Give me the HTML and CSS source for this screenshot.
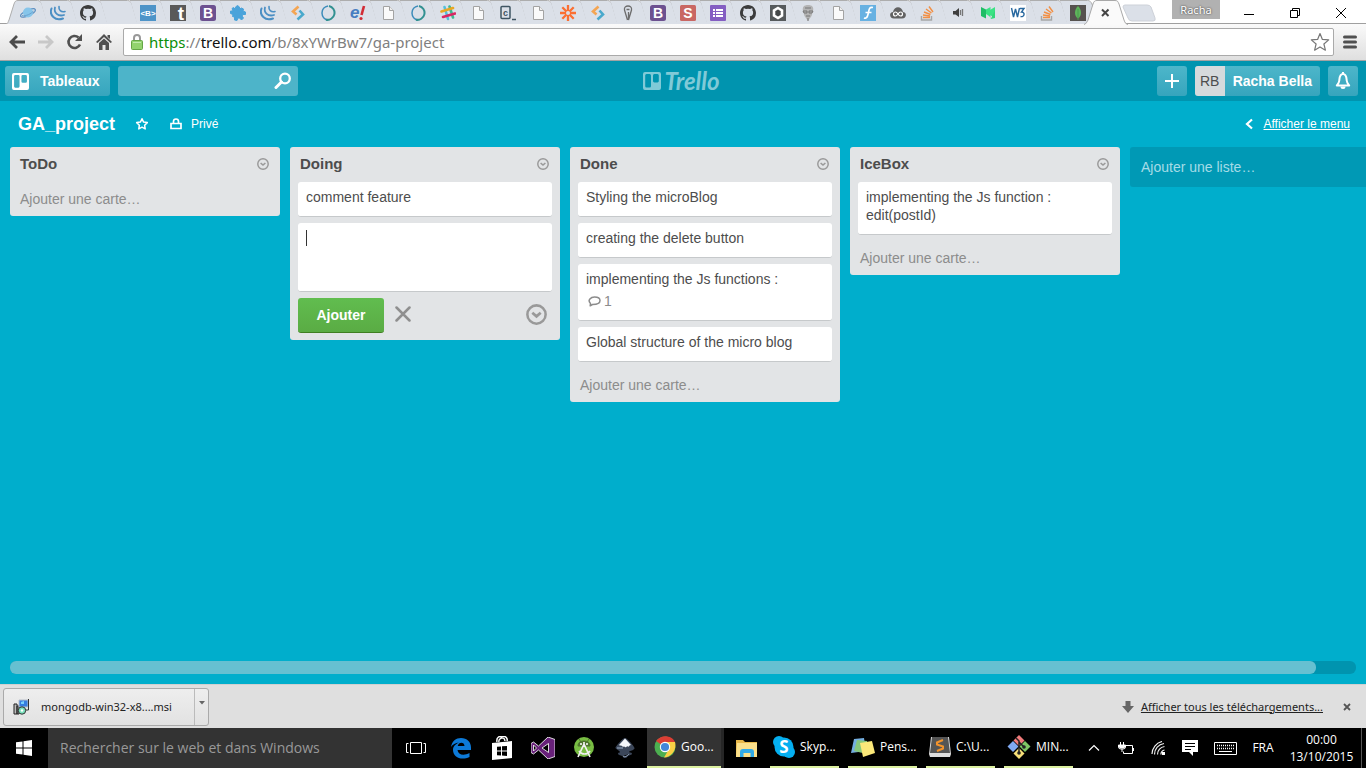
FILE: index.html
```html
<!DOCTYPE html>
<html lang="fr">
<head>
<meta charset="utf-8">
<title>GA_project | Trello</title>
<link rel="stylesheet" href="styles.css">
</head>
<body>
<svg class="symbols" aria-hidden="true">
  <symbol id="tab" viewBox="0 0 44 24">
    <path d="M4 1H31.500C34 1 35 2 36 4L42 24H11L5.500 4C5 2 4.500 1 4 1Z" fill="#dbe0e8"/>
    <path d="M4 .5H31.500C34 .5 35 2 36 4L41 21C41.500 23 42 23.500 43 24" fill="none" stroke="#adadad"/>
  </symbol>
  <symbol id="tab-first" viewBox="0 0 44 24">
    <path d="M0 24C2 23.500 2 22 3 20L8 4C9 1 10 .5 12 .5H31.500C34 .5 35 2 36 4L41 21C41.500 23 42 23.500 43 24" fill="#dbe0e8" stroke="#adadad"/>
  </symbol>
  <symbol id="planet" viewBox="0 0 16 16"><ellipse cx="8" cy="8" rx="8" ry="2.600" fill="none" stroke="#5b8ec0" stroke-width="1.200" transform="rotate(-25 8 8)"/><circle cx="8" cy="7.500" r="5" fill="#86c5ea"/><path d="M2 10.500C6 11.500 11 9 14 5.500" fill="none" stroke="#6aa2cf"/></symbol>
  <symbol id="jq" viewBox="0 0 16 16"><g fill="none" stroke="#4b8fc4" stroke-linecap="round"><path d="M1.500 3.500C-1 10 5 16.500 13 13.500" stroke-width="2"/><path d="M5 2.500C3.500 7.500 8 12 14 10" stroke-width="1.800"/><path d="M9 1.500C8.500 5 11 7.500 15 6.500" stroke-width="1.600"/></g></symbol>
  <symbol id="github" viewBox="0 0 16 16"><path fill="#3c3c3c" d="M8 0C3.580 0 0 3.580 0 8c0 3.540 2.290 6.530 5.470 7.590.4.070.55-.17.55-.38v-1.490c-2.230.48-2.700-1.070-2.700-1.070-.36-.92-.89-1.170-.89-1.170-.73-.5.05-.49.050-.49.810.060 1.230.83 1.230.83.72 1.230 1.880.87 2.340.67.070-.52.28-.87.51-1.070-1.780-.2-3.640-.89-3.640-3.950 0-.87.31-1.590.82-2.150-.08-.2-.36-1.020.08-2.120 0 0 .67-.21 2.200.82a7.600 7.600 0 0 1 4 0c1.530-1.040 2.200-.82 2.200-.82.44 1.100.16 1.920.08 2.120.51.56.82 1.270.82 2.150 0 3.070-1.870 3.750-3.650 3.950.29.25.54.73.54 1.480v2.200c0 .21.15.46.55.38A8 8 0 0 0 16 8c0-4.420-3.580-8-8-8z"/></symbol>
  <symbol id="doc" viewBox="0 0 16 16"><path d="M3.500 1.500H9.500L13.500 5.500V14.500H3.500Z" fill="#fafafa" stroke="#a3a3a3"/><path d="M9.500 1.500V5.500H13.500" fill="#eee" stroke="#a3a3a3"/></symbol>
  <symbol id="btag" viewBox="0 0 16 16"><path fill="#4e94c8" d="M0 0h16v16H0z"/><text x="8" y="11" font-size="8" font-weight="700" fill="#fff" text-anchor="middle">&lt;B&gt;</text></symbol>
  <symbol id="tumblr" viewBox="0 0 16 16"><path fill="#595959" d="M0 0h16v16H0z"/><text x="11" y="15" font-size="19" font-weight="700" fill="#fff" text-anchor="middle">t</text></symbol>
  <symbol id="boot" viewBox="0 0 16 16"><rect width="16" height="16" rx="2.500" fill="#6c5190"/><text x="8" y="13" font-size="14" font-weight="700" fill="#fff" text-anchor="middle">B</text></symbol>
  <symbol id="puzzle" viewBox="0 0 16 16"><path fill="#4aa3da" d="M5 4L5.500 2 7.500 .5 9.500 2 9.500 4 11.500 3 13.500 4 13 6 15.500 7 15.500 9.500 13 9.500 12 11 13.500 13 11.500 15 9.500 13 8 13 7 15.500 4.500 15 4.500 12 2.500 11.500 3 9.500 .5 8.500 .5 6 3 6 2 3.500 3.500 2.500Z" stroke="#4aa3da" stroke-linejoin="round"/></symbol>
  <symbol id="seven" viewBox="0 0 16 16"><path d="M8.500 1.500L3 6.500 6.500 9.500" fill="none" stroke="#f4a552" stroke-width="2.600"/><path d="M9.500 5.500L13 9.500 7.500 14.500" fill="none" stroke="#49a9cc" stroke-width="2.600"/></symbol>
  <symbol id="ring" viewBox="0 0 16 16"><path d="M8 .9A7.200 7.200 0 0 0 8 15.100" fill="none" stroke="#3c8cba" stroke-width="1.500"/><path d="M6 14.700A7 7 0 0 0 9 1" fill="none" stroke="#329191" stroke-width="2"/></symbol>
  <symbol id="eb" viewBox="0 0 16 16"><text x="0" y="13" font-size="17" font-style="italic" font-weight="700" fill="#477dc1">e</text><path d="M14 1L11.500 10" stroke="#d22c35" stroke-width="2.600"/><circle cx="11" cy="13.500" r="1.600" fill="#d22c35"/></symbol>
  <symbol id="slack" viewBox="0 0 16 16"><g stroke-width="2.600" stroke-linecap="round"><path d="M4.500 2L8 14" stroke="#53bfdb"/><path d="M9.500 1.500L13 12.500" stroke="#3eb991"/><path d="M1.500 6.500L13 3" stroke="#e8a723"/><path d="M3 12L15 8.500" stroke="#d92764"/></g></symbol>
  <symbol id="codec" viewBox="0 0 16 16"><rect x="1" y="1.500" width="9" height="12" rx="1" fill="none" stroke="#3f5563" stroke-width="1.500"/><text x="5.500" y="11" font-size="9" font-weight="700" fill="#3f5563" text-anchor="middle">c</text><path d="M12 14.500h4" stroke="#3f5563" stroke-width="1.500"/></symbol>
  <symbol id="zap" viewBox="0 0 16 16"><path d="M8 0V16M0 8H16M2.300 2.300L13.700 13.700M13.700 2.300L2.300 13.700" stroke="#fb6f32" stroke-width="2.300"/><circle cx="8" cy="8" r="2" fill="#dbe0e8"/></symbol>
  <symbol id="pin" viewBox="0 0 16 16"><path d="M7.500 15L4.500 5C4 2 6 1 8 1S12 2 11.500 5L8.500 15V7M6.500 4.500h3" fill="none" stroke="#6d6d6d" stroke-width="1.300"/></symbol>
  <symbol id="sred" viewBox="0 0 16 16"><rect width="16" height="16" rx="1.500" fill="#c96763"/><text x="8" y="13" font-size="14" font-weight="700" fill="#fff" text-anchor="middle">S</text></symbol>
  <symbol id="forms" viewBox="0 0 16 16"><rect width="16" height="16" rx="1" fill="#845ec2"/><path d="M3 5h2M3 8h2M3 11h2M6 5h7M6 8h7M6 11h7" stroke="#fff" stroke-width="1.800"/></symbol>
  <symbol id="hex" viewBox="0 0 16 16"><path fill="#565a5c" d="M0 0h16v16H0z"/><path d="M8 3L12 5.500V10.500L8 13 4 10.500V5.500Z" fill="#454849" stroke="#fff" stroke-width="2.600"/></symbol>
  <symbol id="face" viewBox="0 0 16 16"><path d="M3 6C2 2 4 0 8 0S14 2 13 6L11.500 11 8 16 4.500 11Z" fill="#b4b4b4"/><path d="M3 6h4v2H4ZM9 6h4l-1 2H9ZM6 11h4M8 13v3M5 3h6" fill="none" stroke="#777"/></symbol>
  <symbol id="fblue" viewBox="0 0 16 16"><path fill="#67b1e2" d="M0 0h16v16H0z"/><path d="M13 2.500C8 1.500 9.500 6 7.500 11 7 13 5 13.500 4 13M5.500 7.500h6" fill="none" stroke="#fff" stroke-width="1.700"/></symbol>
  <symbol id="cloud" viewBox="0 0 16 16"><path d="M4 13.500C-1 13.500-1 7 3 7 4 .5 12 .5 13 7 17 7 17 13.500 12 13.500Z" fill="#626262"/><path d="M8 9C7 7.500 6.500 7 5.500 7a2 2 0 0 0 0 4C7.500 11 8.500 7 10.500 7a2 2 0 0 1 0 4C9.500 11 9 10.500 8 9Z" fill="none" stroke="#fff" stroke-width="1.200"/></symbol>
  <symbol id="stack" viewBox="0 0 16 16"><path d="M1.500 11V15H11.500V11" fill="none" stroke="#a6a6a6" stroke-width="1.400"/><path d="M3 12.500h7M3 10l7 1M4 7l6.500 2.500M6 4l5.500 4M9 1.500L13 7" stroke="#f28f44" stroke-width="1.400"/></symbol>
  <symbol id="sound" viewBox="0 0 16 16"><path d="M3 6h2.500L9 3V12L5.500 9.500H3Z" fill="#3f3f3f"/><path d="M10.500 5v5M12.500 4v7" stroke="#777" stroke-width="1.300"/></symbol>
  <symbol id="medium" viewBox="0 0 16 16"><path d="M1 2L6 4.500V13.500L1 11Z" fill="#20bd66"/><path d="M6 4.500L10.500 2 10.500 12 6 9Z" fill="#3be384"/><path d="M10 5l5-3v11l-5-3Z" fill="#3be384"/><path d="M6 4.500L11 13.500 15 5V13L11 14Z" fill="#33d77a"/></symbol>
  <symbol id="w3" viewBox="0 0 16 16"><path fill="#fff" d="M0 0h16v16H0z"/><path d="M1.500 3l2 9 2-8 2 8 2-9M10 3.500h4L11.500 7c4 0 3 5.500-1 4.500" fill="none" stroke="#28689f" stroke-width="1.400"/></symbol>
  <symbol id="mongo" viewBox="0 0 16 16"><path fill="#56524f" d="M0 0h16v16H0z"/><path d="M8 1C12 5 12 11 8 13.500 4 11 4 5 8 1Z" fill="#5eb55b"/><path d="M8 4V15" stroke="#4a9a4f"/></symbol>
  <symbol id="board-mark" viewBox="0 0 18 18"><path fill="currentColor" fill-rule="evenodd" d="M2 0H16Q18 0 18 2V16Q18 18 16 18H2Q0 18 0 16V2Q0 0 2 0ZM3.500 2Q2.200 2 2.200 3.500V14Q2.200 15.500 3.500 15.500H6.700Q8 15.500 8 14V3.500Q8 2 6.700 2ZM11.300 2Q10 2 10 3.500V9Q10 10.400 11.300 10.400H14.500Q15.800 10.400 15.800 9V3.500Q15.800 2 14.500 2Z"/></symbol>
  <symbol id="circle-down" viewBox="0 0 20 20"><circle cx="10" cy="10" r="8.700" fill="none" stroke="currentColor" stroke-width="2.400"/><path d="M6 8.300L10 11.800 14 8.300" fill="none" stroke="currentColor" stroke-width="2.600"/></symbol>
</svg>

<header class="browser">
  <div class="tab-strip">
    <div class="tabs">
      <button class="tab" aria-label="Onglet 1"><svg class="shape"><use href="#tab-first"/></svg><svg class="fav"><use href="#planet"/></svg></button>
      <button class="tab" aria-label="Onglet 2"><svg class="shape"><use href="#tab"/></svg><svg class="fav"><use href="#jq"/></svg></button>
      <button class="tab" aria-label="Onglet 3"><svg class="shape"><use href="#tab"/></svg><svg class="fav"><use href="#github"/></svg></button>
      <button class="tab" aria-label="Onglet 4"><svg class="shape"><use href="#tab"/></svg></button>
      <button class="tab" aria-label="Onglet 5"><svg class="shape"><use href="#tab"/></svg><svg class="fav"><use href="#btag"/></svg></button>
      <button class="tab" aria-label="Onglet 6"><svg class="shape"><use href="#tab"/></svg><svg class="fav"><use href="#tumblr"/></svg></button>
      <button class="tab" aria-label="Onglet 7"><svg class="shape"><use href="#tab"/></svg><svg class="fav"><use href="#boot"/></svg></button>
      <button class="tab" aria-label="Onglet 8"><svg class="shape"><use href="#tab"/></svg><svg class="fav"><use href="#puzzle"/></svg></button>
      <button class="tab" aria-label="Onglet 9"><svg class="shape"><use href="#tab"/></svg><svg class="fav"><use href="#jq"/></svg></button>
      <button class="tab" aria-label="Onglet 10"><svg class="shape"><use href="#tab"/></svg><svg class="fav"><use href="#seven"/></svg></button>
      <button class="tab" aria-label="Onglet 11"><svg class="shape"><use href="#tab"/></svg><svg class="fav"><use href="#ring"/></svg></button>
      <button class="tab" aria-label="Onglet 12"><svg class="shape"><use href="#tab"/></svg><svg class="fav"><use href="#eb"/></svg></button>
      <button class="tab" aria-label="Onglet 13"><svg class="shape"><use href="#tab"/></svg><svg class="fav"><use href="#doc"/></svg></button>
      <button class="tab" aria-label="Onglet 14"><svg class="shape"><use href="#tab"/></svg><svg class="fav"><use href="#ring"/></svg></button>
      <button class="tab" aria-label="Onglet 15"><svg class="shape"><use href="#tab"/></svg><svg class="fav"><use href="#slack"/></svg></button>
      <button class="tab" aria-label="Onglet 16"><svg class="shape"><use href="#tab"/></svg><svg class="fav"><use href="#doc"/></svg></button>
      <button class="tab" aria-label="Onglet 17"><svg class="shape"><use href="#tab"/></svg><svg class="fav"><use href="#codec"/></svg></button>
      <button class="tab" aria-label="Onglet 18"><svg class="shape"><use href="#tab"/></svg><svg class="fav"><use href="#doc"/></svg></button>
      <button class="tab" aria-label="Onglet 19"><svg class="shape"><use href="#tab"/></svg><svg class="fav"><use href="#zap"/></svg></button>
      <button class="tab" aria-label="Onglet 20"><svg class="shape"><use href="#tab"/></svg><svg class="fav"><use href="#seven"/></svg></button>
      <button class="tab" aria-label="Onglet 21"><svg class="shape"><use href="#tab"/></svg><svg class="fav"><use href="#pin"/></svg></button>
      <button class="tab" aria-label="Onglet 22"><svg class="shape"><use href="#tab"/></svg><svg class="fav"><use href="#boot"/></svg></button>
      <button class="tab" aria-label="Onglet 23"><svg class="shape"><use href="#tab"/></svg><svg class="fav"><use href="#sred"/></svg></button>
      <button class="tab" aria-label="Onglet 24"><svg class="shape"><use href="#tab"/></svg><svg class="fav"><use href="#forms"/></svg></button>
      <button class="tab" aria-label="Onglet 25"><svg class="shape"><use href="#tab"/></svg><svg class="fav"><use href="#github"/></svg></button>
      <button class="tab" aria-label="Onglet 26"><svg class="shape"><use href="#tab"/></svg><svg class="fav"><use href="#hex"/></svg></button>
      <button class="tab" aria-label="Onglet 27"><svg class="shape"><use href="#tab"/></svg><svg class="fav"><use href="#face"/></svg></button>
      <button class="tab" aria-label="Onglet 28"><svg class="shape"><use href="#tab"/></svg><svg class="fav"><use href="#doc"/></svg></button>
      <button class="tab" aria-label="Onglet 29"><svg class="shape"><use href="#tab"/></svg><svg class="fav"><use href="#fblue"/></svg></button>
      <button class="tab" aria-label="Onglet 30"><svg class="shape"><use href="#tab"/></svg><svg class="fav"><use href="#cloud"/></svg></button>
      <button class="tab" aria-label="Onglet 31"><svg class="shape"><use href="#tab"/></svg><svg class="fav"><use href="#stack"/></svg></button>
      <button class="tab" aria-label="Onglet 32"><svg class="shape"><use href="#tab"/></svg><svg class="fav"><use href="#sound"/></svg></button>
      <button class="tab" aria-label="Onglet 33"><svg class="shape"><use href="#tab"/></svg><svg class="fav"><use href="#medium"/></svg></button>
      <button class="tab" aria-label="Onglet 34"><svg class="shape"><use href="#tab"/></svg><svg class="fav"><use href="#w3"/></svg></button>
      <button class="tab" aria-label="Onglet 35"><svg class="shape"><use href="#tab"/></svg><svg class="fav"><use href="#stack"/></svg></button>
      <button class="tab" aria-label="Onglet 36"><svg class="shape"><use href="#tab"/></svg><svg class="fav"><use href="#mongo"/></svg></button>
      <button class="tab tab-active" aria-label="Fermer l'onglet"><svg class="shape" viewBox="0 0 44 25"><path d="M0 25C2 24 3 22 4 20L9 4C10 1 11 .5 13 .5H31C34 .5 34 2 35 4L40 20C41 23 42 24 44 24.500V25Z" fill="#fafafa"/><path d="M0 24.500C2 24 3 22 4 20L9 4C10 1 11 .5 13 .5H31C34 .5 34 2 35 4L40 20C41 23 42 24 44 24.500" fill="none" stroke="#a8a8a8"/><path d="M18 9.500l6.500 6.500M24.500 9.500L18 16" stroke="#444" stroke-width="2"/></svg></button>
      <button class="new-tab" aria-label="Nouvel onglet"><svg width="34" height="18" viewBox="0 0 34 18"><path d="M3 1H25Q28 1 29 3L33 14Q34 17 31 17H10Q7 17 6 14L1 3Q1 1 3 1Z" fill="#dbe0e8" stroke="#cdd1d8"/></svg></button>
    </div>
    <div class="window-tools">
      <button class="profile">Racha</button>
      <button class="win" aria-label="Réduire"><svg width="12" height="12"><path d="M1 7.500h10" stroke="#000"/></svg></button>
      <button class="win" aria-label="Restaurer"><svg width="12" height="12"><path d="M1.500 3.500h7v7h-7ZM3.500 3.500v-2h7v7h-2" fill="none" stroke="#000"/></svg></button>
      <button class="win" aria-label="Fermer"><svg width="12" height="12"><path d="M1 1l10 10M11 1L1 11" stroke="#000"/></svg></button>
    </div>
  </div>
  <nav class="toolbar">
    <button class="tool" aria-label="Retour"><svg width="18" height="16"><path d="M9 2L3 8l6 6M3 8h14" fill="none" stroke="#4b4b4b" stroke-width="2.800"/></svg></button>
    <button class="tool" aria-label="Avancer"><svg width="18" height="16"><path d="M9 2l6 6-6 6M15 8H1" fill="none" stroke="#c8c8c8" stroke-width="2.800"/></svg></button>
    <button class="tool" aria-label="Actualiser"><svg width="18" height="16"><path d="M14 10.500A6 6 0 1 1 12.500 3.500" fill="none" stroke="#505050" stroke-width="2.600"/><path d="M16 0v7H9Z" fill="#505050"/></svg></button>
    <button class="tool" aria-label="Accueil"><svg width="18" height="16"><path d="M9 0l8 8-1.500 1L9 3 2.500 9 1 8ZM4 9l5-4.500L14 9v7h-3.500v-5h-3v5H4ZM12.500 1H15v4l-2.500-2Z" fill="#505050"/></svg></button>
    <div class="address">
      <svg width="12" height="16" viewBox="0 0 12 16"><path d="M3 7V4a3 3 0 0 1 6 0v3" fill="none" stroke="#999" stroke-width="2"/><rect x=".5" y="6.500" width="11" height="9" rx="1" fill="#92d36e" stroke="#64a546"/><path d="M2 8.500h8" stroke="#c0ecab"/></svg>
      <a class="url" href="#"><span class="scheme">https</span>://<span class="host">trello.com</span>/b/8xYWrBw7/ga-project</a>
      <button class="bookmark" aria-label="Favori"><svg width="20" height="20" viewBox="0 0 20 20"><path d="M10 1.500l2.400 5.900 6.300.5-4.800 4.100 1.500 6.200-5.400-3.300-5.400 3.300 1.500-6.200L1.300 7.900l6.300-.5Z" fill="none" stroke="#777" stroke-width="1.200" stroke-linejoin="round"/></svg></button>
    </div>
    <button class="tool-menu" aria-label="Menu"><svg width="14" height="14"><path d="M1.500 2h11M1.500 7h11M1.500 12h11" stroke="#505050" stroke-width="3" stroke-linecap="round"/></svg></button>
  </nav>
</header>

<main class="app">
  <header class="app-header">
    <div class="header-side">
      <button class="header-btn boards-btn"><svg width="17" height="17"><use href="#board-mark"/></svg>Tableaux</button>
      <div class="search"><input type="text" aria-label="Rechercher"><svg width="18" height="18" viewBox="0 0 18 18"><circle cx="11" cy="6.500" r="4.800" fill="none" stroke="#fff" stroke-width="2.300"/><path d="M7.500 10L2 15.500" stroke="#fff" stroke-width="3" stroke-linecap="round"/></svg></div>
    </div>
    <a class="logo" href="#"><svg width="18" height="18"><use href="#board-mark"/></svg><span>Trello</span></a>
    <div class="header-side header-right">
      <button class="header-btn icon-btn" aria-label="Créer"><svg width="14" height="14"><path d="M7 0v14M0 7h14" stroke="#fff" stroke-width="2"/></svg></button>
      <button class="header-btn member"><span class="initials">RB</span><span class="member-name">Racha Bella</span></button>
      <button class="header-btn icon-btn" aria-label="Notifications"><svg width="16" height="18" viewBox="0 0 16 18"><path d="M8 2C4.500 2 4.500 6 4.300 8.500 4 11 2.800 12 1.800 13.500H14.200C13.200 12 12 11 11.700 8.500 11.500 6 11.500 2 8 2Z" fill="none" stroke="#fff" stroke-width="2" stroke-linejoin="round"/><path d="M5.500 14.500a2.500 2.500 0 0 0 5 0ZM7 0h2v2H7Z" fill="#fff"/></svg></button>
    </div>
  </header>

  <div class="board-header">
    <h1>GA_project</h1>
    <button class="star" aria-label="Ajouter aux favoris"><svg width="14" height="14" viewBox="0 0 14 14"><path d="M7 1.700l1.600 3.400 3.700.5-2.700 2.600.6 3.700L7 10.200l-3.200 1.700.6-3.700L1.700 5.600l3.700-.5Z" fill="none" stroke="#fff" stroke-width="1.500" stroke-linejoin="round"/></svg></button>
    <button class="privacy"><svg width="12" height="12" viewBox="0 0 12 12"><path d="M1 5.500h10v5H1ZM3.500 5.500V3.500a2.500 2.500 0 0 1 5 0v2" fill="none" stroke="#fff" stroke-width="1.700"/></svg>Privé</button>
    <a class="show-menu" href="#"><svg width="8" height="12"><path d="M7 1.500L2 6l5 4.500" fill="none" stroke="#fff" stroke-width="2.200"/></svg><span>Afficher le menu</span></a>
  </div>

  <div class="lists">
    <section class="list">
      <div class="list-head"><h2>ToDo</h2><button aria-label="Actions"><svg><use href="#circle-down"/></svg></button></div>
      <a class="add-card" href="#">Ajouter une carte…</a>
    </section>
    <section class="list">
      <div class="list-head"><h2>Doing</h2><button aria-label="Actions"><svg><use href="#circle-down"/></svg></button></div>
      <article class="card">comment feature</article>
      <form class="composer">
        <div class="composer-text"><span class="caret"></span><textarea aria-label="Nouvelle carte"></textarea></div>
        <div class="composer-controls">
          <button class="submit" type="button">Ajouter</button>
          <button class="cancel" type="button" aria-label="Annuler"><svg width="16" height="16"><path d="M1.500 1.500l13 13M14.500 1.500l-13 13" stroke="#8f8f8f" stroke-width="2.500" stroke-linecap="round"/></svg></button>
          <button class="options" type="button" aria-label="Options"><svg width="21" height="21"><use href="#circle-down"/></svg></button>
        </div>
      </form>
    </section>
    <section class="list">
      <div class="list-head"><h2>Done</h2><button aria-label="Actions"><svg><use href="#circle-down"/></svg></button></div>
      <article class="card">Styling the microBlog</article>
      <article class="card">creating the delete button</article>
      <article class="card">implementing the Js functions :
        <div class="badge"><svg width="13" height="11" viewBox="0 0 13 11"><path d="M4.500 8.500L2.200 9.800 2.500 7.500C-1 4 3 1 6.500 1S12 2.500 12 4.500 9.500 8.500 4.500 8.500Z" fill="none" stroke="#8c8c8c" stroke-width="1.500" stroke-linejoin="round"/></svg>1</div>
      </article>
      <article class="card">Global structure of the micro blog</article>
      <a class="add-card" href="#">Ajouter une carte…</a>
    </section>
    <section class="list">
      <div class="list-head"><h2>IceBox</h2><button aria-label="Actions"><svg><use href="#circle-down"/></svg></button></div>
      <article class="card">implementing the Js function : edit(postId)</article>
      <a class="add-card" href="#">Ajouter une carte…</a>
    </section>
    <a class="add-list" href="#">Ajouter une liste…</a>
  </div>
  <div class="scrollbar"><div class="thumb"></div></div>
</main>

<footer class="downloads">
  <div class="download">
    <button class="file"><svg width="16" height="16" viewBox="0 0 16 16"><path d="M1 5h3v10H1ZM4 7h2v8H4Z" fill="#bbb" stroke="#222"/><path d="M6 1h9v7H6Z" fill="#357de0" stroke="#b8bfc9"/><path d="M15.500 0v11H9" fill="none" stroke="#333"/><path d="M8 3l3-1v3H8Z" fill="#78d0fc"/><circle cx="9" cy="11.500" r="3.700" fill="#7be0bd" stroke="#333"/><circle cx="9" cy="11.500" r="1.200" fill="#fff"/></svg>mongodb-win32-x8....msi</button>
    <button class="file-menu" aria-label="Options du fichier"><svg width="6" height="4"><path d="M0 0h6L3 3.500Z" fill="#666"/></svg></button>
  </div>
  <div class="all-downloads">
    <svg width="12" height="12"><path d="M3.500 0h5v5H12L6 12 0 5h3.500Z" fill="#666"/></svg>
    <a href="#">Afficher tous les téléchargements...</a>
    <button aria-label="Fermer"><svg width="8" height="8"><path d="M1 1l6 6M7 1L1 7" stroke="#555" stroke-width="1.800"/></svg></button>
  </div>
</footer>

<nav class="taskbar">
  <button class="start" aria-label="Démarrer"><svg width="16" height="16"><path d="M0 2.300L6.500 1.400V7.500H0ZM7.500 1.200L16 0V7.500H7.500ZM0 8.500H6.500V14.600L0 13.700ZM7.500 8.500H16V16L7.500 14.800Z" fill="#fff"/></svg></button>
  <input class="task-search" type="text" aria-label="Recherche" placeholder="Rechercher sur le web et dans Windows">
  <button class="start" aria-label="Vue des tâches"><svg width="20" height="14"><path d="M4.500 1.500h11v11h-11ZM2.500 2.500h-2v9h2M17.500 2.500h2v9h-2" fill="none" stroke="#fff"/></svg></button>
  <button class="pinned" aria-label="Edge"><svg width="20" height="22" viewBox="0 0 20 22"><path d="M0 10C1 4 5 1 10 1 16 1 20 5 20 10.500V13H6.500C7 18 13 19 18.500 16V20C10 24 2 20 2 13 2 9 5 7 8 5.500 4.500 6 1.500 7.500 0 10ZM6.700 9H13.500C13.500 4.500 7.500 4.500 6.700 9Z" fill="#0d7ad8"/></svg></button>
  <button class="pinned" aria-label="Store"><svg width="22" height="24" viewBox="0 0 22 24"><path d="M1 7l20-2v17L1 24Z" fill="#fff"/><path d="M6 6C5 1 9 0 10 1 14-1 17 2 16 5M8 6C7 3 13-1 14 5" fill="none" stroke="#fff" stroke-width="1.500"/><path d="M6 10.700l4-.3v4H6ZM11 10.300l5-.4v4.500h-5ZM6 15.400h4v4l-4-.2ZM11 15.400h5v4.500l-5-.4Z" fill="#000"/></svg></button>
  <button class="pinned" aria-label="Visual Studio"><svg width="24" height="22" viewBox="0 0 24 22"><path fill-rule="evenodd" d="M17 0l7 2.500V19.500L17 22 7.500 13 2.500 17 0 15.500V6.500L2.500 5l5 4ZM2.500 8v6L5.500 11ZM17.500 6.500L11 11l6.500 4.500Z" fill="#68217a" stroke="#eee" stroke-width=".9"/></svg></button>
  <button class="pinned" aria-label="Android Studio"><svg width="20" height="24" viewBox="0 0 20 24"><circle cx="10" cy="11" r="10" fill="#78bd43"/><path d="M4 10C4 6 7 5 10 5S16 6 16 10ZM5 3l2 3M15 3l-2 3" fill="#4e742e" stroke="#4e742e"/><circle cx="7" cy="8" r="1" fill="#fff"/><circle cx="13" cy="8" r="1" fill="#fff"/><path d="M10 8L4 21M10 8l6 13M5 15c3 4 8 4 11 0M10 6v5" fill="none" stroke="#f0f0f0" stroke-width="1.700"/></svg></button>
  <button class="pinned" aria-label="Inkscape"><svg width="20" height="22" viewBox="0 0 20 22"><path d="M10 1C12 1 19 9 19.500 11S14 14 14 15c1 1 3 0 3 2 0 1-3 1-4 2-1 2-4 3-5 1 0-2-4-1-5-3 0-2 2-1 2-2C4 13 0 12 .5 10.500 1 9 8 1 10 1Z" fill="#3b4659"/><path d="M10 1.500L16 8c-2 0-2 3-4 1-1 3-3-1-4 1C7 8 5 9 4 8Z" fill="#f5f7fa"/><path d="M8 19c2 2 5-1 6-2M2 11h6" stroke="#9eb0c8"/></svg></button>
  <button class="task task-current"><svg width="22" height="22" viewBox="0 0 22 22"><circle cx="11" cy="11" r="10.500" fill="#4caf50"/><path d="M11 11L2 5C7-2 18-1 21 6H11Z" fill="#dc3e34"/><path d="M11 6H21C23 13 18 21 10 21.500L15 13Z" fill="#fbd045"/><circle cx="11" cy="11" r="5.200" fill="#fff"/><circle cx="11" cy="11" r="4.100" fill="#4487d8"/></svg>Goo...</button>
  <button class="pinned explorer" aria-label="Explorateur"><svg width="22" height="19" viewBox="0 0 22 19"><path d="M0 1h7l2 2h12v15H0Z" fill="#e8b84a"/><path d="M1 4h20v14H0Z" fill="#fbe08b"/><path d="M4 18v-5q0-3 3-3h8q3 0 3 3v5h-3.500v-4h-7v4Z" fill="#30aae8"/></svg></button>
  <button class="task"><svg width="22" height="22" viewBox="0 0 22 22"><circle cx="11" cy="11" r="9.500" fill="#05aff0"/><circle cx="6" cy="6" r="6" fill="#05aff0"/><circle cx="16" cy="16" r="6" fill="#05aff0"/><text x="11" y="17" font-size="17" font-weight="700" fill="#fff" text-anchor="middle">S</text></svg>Skyp...</button>
  <button class="task"><svg width="24" height="22" viewBox="0 0 24 22"><path d="M3 3l10-1 2 13L0 17Z" fill="#74aee0"/><path d="M6 4l10 1v13L3 15Z" fill="#87c77c"/><path d="M9 7l12-2 3 12-12 4Z" fill="#fbe879"/></svg>Pens...</button>
  <button class="task"><svg width="22" height="22" viewBox="0 0 22 22"><path d="M2 1h18l2 17-1 3H1l-1-3Z" fill="#ddd"/><path d="M3 1h16l2 16H1Z" fill="#555"/><path d="M14 4L8 6.500v2l6 2v2L8 15" fill="none" stroke="#f4932b" stroke-width="2"/></svg>C:\U...</button>
  <button class="task"><svg width="24" height="24" viewBox="0 0 24 24"><path d="M12 0l5.500 5.500-5.500 5.500-5.500-5.500Z" fill="#f17b7b"/><path d="M6 6l5.500 5.500L6 17 .5 11.500Z" fill="#80a9f2"/><path d="M18 6l5.500 5.500L18 17l-5.500-5.500Z" fill="#7fc665"/><path d="M12 13l5.500 5.500-5.500 5.500-5.500-5.500Z" fill="#f7df79"/><path d="M9 3l3 3v12M12 7l5 5" fill="none" stroke="#222" stroke-width="1.500"/><circle cx="12" cy="18" r="1.800" fill="#222"/><circle cx="17" cy="12" r="1.800" fill="#222"/></svg>MIN...</button>
  <div class="tray">
    <button aria-label="Icônes cachées"><svg width="12" height="8"><path d="M1 6.500l5-5 5 5" fill="none" stroke="#fff" stroke-width="1.200"/></svg></button>
    <button aria-label="Batterie"><svg width="16" height="14"><path d="M7 4.500h7.500v8H5.500v-2M15.500 7v3M2.500 1v3M5.500 1v3M.5 4h7v2q0 2-2.500 2H3Q.5 8 .5 6ZM4 8v3" fill="none" stroke="#fff"/><path d="M1 4h6v2.500q-3 2-6 0Z" fill="#fff"/></svg></button>
    <button aria-label="Réseau"><svg width="14" height="14"><path d="M10 13.500A4 4 0 0 1 13.500 9M6.500 13.500A8 8 0 0 1 13.500 5.500M3.500 13.500A11 11 0 0 1 13 2.500M1 13A13 13 0 0 1 11 .5" fill="none" stroke="#eee" stroke-width="1.200"/><path d="M11 11h3v3h-3Z" fill="#fff"/></svg></button>
    <button aria-label="Notifications Windows"><svg width="16" height="16"><path d="M0 0h16v12h-5v4l-4-4H0Z" fill="#fff"/><path d="M3 3.500h10M3 6.500h10M3 9.500h6" stroke="#000"/></svg></button>
    <button class="wide" aria-label="Clavier"><svg width="23" height="13"><path d="M.5.500h22v12H.5Z" fill="none" stroke="#fff"/><path d="M3 3.500h17M3 6.500h17" stroke="#fff" stroke-width="1.500" stroke-dasharray="1 1"/><path d="M5 9.500h13" stroke="#fff"/></svg></button>
    <button class="wide">FRA</button>
    <button class="clock"><span>00:00</span><span>13/10/2015</span></button>
    <button class="desktop" aria-label="Bureau"></button>
  </div>
</nav>
</body>
</html>
```
FILE: styles.css
```css
* { box-sizing: border-box; }

body {
  margin: 0;
  min-height: 100vh;
  display: flex;
  flex-direction: column;
  background: #00aecc;
  font-family: "Liberation Sans", Arial, sans-serif;
  font-size: 14px;
  line-height: 18px;
  color: #4d4d4d;
  overflow: hidden;
}

button, input, textarea {
  margin: 0;
  padding: 0;
  border: 0;
  border-radius: 0;
  background: none;
  font: inherit;
  color: inherit;
  outline: none;
}

button, a { cursor: pointer; }
svg { flex: none; }
.symbols { display: none; }

/* Browser window */
.tab-strip {
  display: flex;
  justify-content: space-between;
  height: 24px;
  background: #fff;
  box-shadow: inset 0 -1px #9f9f9f;
}
.tabs { display: flex; padding-left: 13px; }
.tab {
  display: grid;
  place-content: center;
  place-items: center;
  grid-template: 24px / 30px;
  width: 30px;
  height: 24px;
}
.tab > svg { grid-area: 1 / 1; }
.shape { width: 44px; height: 24px; }
.fav { width: 16px; height: 16px; margin-top: 2px; z-index: 1; }
.tab-active { height: 25px; margin-left: -2px; grid-template-rows: 25px; z-index: 2; }
.tab-active .shape { height: 25px; }
.new-tab { display: flex; padding: 4px 0 0 1px; z-index: 3; }
.window-tools { display: flex; padding-right: 2px; }
.profile {
  align-self: flex-start;
  width: 48px;
  height: 19px;
  margin-right: 6px;
  background: #b1b1b1;
  color: #fff;
  font: 11px/18px "Noto Sans", sans-serif;
  text-shadow: 0 0 2px #222;
}
.win { display: grid; place-items: center; width: 46px; height: 25px; }
.toolbar {
  display: flex;
  align-items: center;
  height: 37px;
  padding: 0 9px 0 2px;
  background: linear-gradient(#fafafa, #dfdfdf);
  border-bottom: 1px solid #a3a3a3;
}
.tool { display: grid; place-items: center; width: 29px; height: 28px; }
.address {
  flex: 1;
  display: flex;
  align-items: center;
  gap: 6px;
  height: 28px;
  margin: 0 9px 0 5px;
  padding: 0 3px 0 7px;
  border: 1px solid #aaa;
  border-radius: 2px;
  background: #fff;
}
.url {
  flex: 1;
  color: #808080;
  font: 15px/24px "Noto Sans", sans-serif;
  text-decoration: none;
}
.scheme { color: #0a8f08; }
.host { color: #111; }
.bookmark, .tool-menu { display: flex; }

/* Application */
.app { flex: 1; display: flex; flex-direction: column; min-width: 0; }
.app-header {
  display: flex;
  align-items: center;
  height: 40px;
  padding: 0 8px 0 5px;
  background: #0094af;
}
.header-side { flex: 1; display: flex; gap: 8px; }
.header-right { justify-content: flex-end; }
.header-btn {
  display: flex;
  align-items: center;
  height: 30px;
  border-radius: 3px;
  background: linear-gradient(#4db6ca, #36a5bd);
  color: #fff;
  font-weight: 700;
}
.boards-btn { gap: 11px; width: 105px; padding-left: 7px; }
.icon-btn { width: 30px; justify-content: center; }
.search {
  display: flex;
  align-items: center;
  width: 180px;
  height: 30px;
  padding: 0 6px;
  border-radius: 3px;
  background: #4db4c9;
}
.search input { flex: 1; min-width: 0; color: #fff; }
.logo {
  display: flex;
  align-items: center;
  gap: 3px;
  color: #80cad7;
  text-decoration: none;
  font: italic 700 24px/30px Lato, sans-serif;
}
.initials {
  width: 30px;
  line-height: 30px;
  border-radius: 3px 0 0 3px;
  background: #d6dadc;
  color: #4d4d4d;
  font-weight: 400;
}
.member-name { padding: 0 8px; }
.board-header {
  display: flex;
  align-items: center;
  height: 46px;
  padding: 0 16px 0 18px;
  color: #fff;
  font-size: 12px;
}
.board-header h1 { margin: 0 20px 0 0; font-size: 18px; line-height: 24px; }
.star { display: flex; margin-right: 21px; }
.privacy, .show-menu { display: flex; align-items: center; gap: 9px; color: #fff; }
.show-menu { margin-left: auto; gap: 11px; text-decoration: none; }
.show-menu span { text-decoration: underline; }

.lists {
  flex: 1;
  display: flex;
  align-items: flex-start;
  gap: 10px;
  padding-left: 10px;
  overflow: hidden;
}
.list {
  flex: none;
  width: 270px;
  padding: 0 8px;
  border-radius: 3px;
  background: #e2e4e6;
}
.list-head {
  display: flex;
  justify-content: space-between;
  align-items: center;
  height: 35px;
  padding: 0 3px 2px 2px;
}
.list-head h2 { margin: 0; font-size: 15px; line-height: 18px; }
.list-head button { display: flex; color: #999; }
.list-head svg { width: 12px; height: 12px; }
.card {
  margin-bottom: 6px;
  padding: 6px 8px 10px;
  border-bottom: 1px solid #c6c9cb;
  border-radius: 3px;
  background: #fff;
}
.badge {
  display: flex;
  align-items: center;
  gap: 3px;
  height: 22px;
  padding: 4px 0 0 2px;
  color: #8c8c8c;
}
.add-card {
  display: block;
  padding: 8px 2px;
  color: #8c8c8c;
  text-decoration: none;
}
.composer { padding-bottom: 7px; }
.composer-text {
  display: flex;
  height: 69px;
  margin-bottom: 6px;
  padding: 7px 8px;
  border-bottom: 1px solid #c6c9cb;
  border-radius: 3px;
  background: #fff;
}
.composer textarea { flex: 1; resize: none; }
.caret { width: 1px; height: 16px; background: #333; }
.composer-controls { display: flex; align-items: center; }
.submit {
  width: 86px;
  height: 35px;
  border-bottom: 1px solid #3f7f22;
  border-radius: 3px;
  background: linear-gradient(#61bd4f, #5aac44);
  color: #fff;
  font-weight: 700;
}
.cancel { display: flex; margin-left: 11px; padding-bottom: 3px; }
.options { display: flex; margin: 0 5px 0 auto; padding-bottom: 3px; color: #999; }
.add-list {
  flex: none;
  width: 270px;
  padding: 11px;
  border-radius: 3px;
  background: #0099b5;
  color: #a5dce7;
  text-decoration: none;
}
.scrollbar {
  margin: 0 10px 10px;
  border-radius: 6px;
  background: #0094af;
}
.thumb { width: 97%; height: 13px; border-radius: 6px; background: #66c0d1; }

/* Downloads */
.downloads {
  display: flex;
  justify-content: space-between;
  align-items: center;
  height: 44px;
  padding: 0 15px 0 3px;
  border-top: 1px solid #d0d0d0;
  background: #dfdfdf;
  color: #222;
  font: 11px/18px "Noto Sans", sans-serif;
}
.download {
  display: flex;
  height: 38px;
  border: 1px solid #aaa;
  border-radius: 3px;
  background: linear-gradient(#eee, #e2e2e2);
}
.file { display: flex; align-items: center; gap: 12px; width: 190px; padding-left: 9px; }
.file-menu { width: 14px; padding-bottom: 12px; border-left: 1px solid #bbb; }
.all-downloads { display: flex; align-items: center; gap: 7px; }
.all-downloads a { color: #222; }
.all-downloads button { display: flex; margin-left: 13px; }

/* Taskbar */
.taskbar {
  display: flex;
  height: 40px;
  background: #000;
  color: #fff;
  font: 12px/18px "Open Sans", sans-serif;
}
.start, .pinned { flex: none; display: grid; place-items: center; width: 48px; }
.pinned { width: 41px; }
.task-search { width: 344px; padding-left: 12px; background: #333; font-size: 14px; }
.task-search::placeholder { color: #999; opacity: 1; }
.task {
  flex: none;
  display: flex;
  align-items: center;
  gap: 5px;
  width: 69px;
  margin-right: 9px;
  padding-left: 3px;
  border-bottom: 2px solid #dcf0a0;
}
.task:nth-last-child(2) { margin-right: 0; }
.task-current { width: 74px; margin: 0 0 0 2px; padding-left: 7px; background: #333; }
.explorer { width: 49px; border-left: 3px solid #262626; }
.tray { flex: none; display: flex; margin-left: auto; }
.tray button { display: grid; place-items: center; width: 32px; }
.tray .wide { width: 38px; }
.tray .clock { width: 79px; align-content: center; line-height: 17px; }
.tray .desktop { width: 5px; border-left: 1px solid #555; }
```
